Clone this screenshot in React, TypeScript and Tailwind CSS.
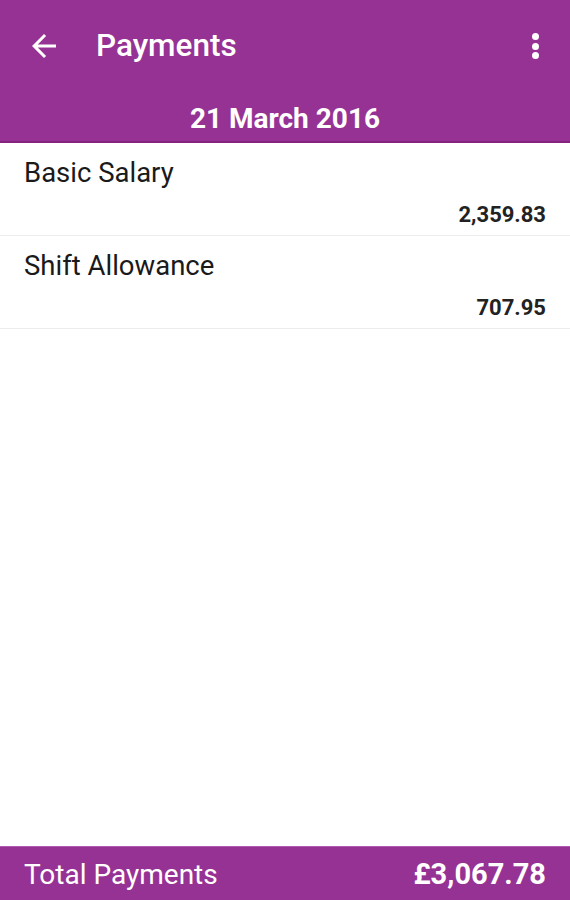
export default function App() {
  const items = [
    { name: "Basic Salary", amount: "2,359.83" },
    { name: "Shift Allowance", amount: "707.95" },
  ];

  return (
    <div className="flex h-[900px] w-[570px] flex-col bg-white font-['Roboto',sans-serif]">
      <div className="flex flex-col border-b-2 border-[#85237f] bg-[#973295] text-white">
        <div className="flex h-[92px] items-center pl-[26px] pr-[30px]">
          <svg width="36" height="36" viewBox="0 0 24 24" className="shrink-0">
            <path
              d="M20 11H7.83l5.59-5.59L12 4l-8 8 8 8 1.41-1.41L7.83 13H20v-2z"
              fill="#fff"
            />
          </svg>
          <p className="ml-[34px] text-[31.5px] font-medium">Payments</p>
          <div className="ml-auto flex flex-col items-center gap-[2.5px] pr-[1px]">
            <span className="h-[7px] w-[7px] rounded-full bg-white"></span>
            <span className="h-[7px] w-[7px] rounded-full bg-white"></span>
            <span className="h-[7px] w-[7px] rounded-full bg-white"></span>
          </div>
        </div>
        <div className="flex h-[49px] items-center justify-center pt-[4px]">
          <p className="text-[28px] font-bold">21 March 2016</p>
        </div>
      </div>
      <div className="flex grow flex-col">
        {items.map((item) => (
          <div
            key={item.name}
            className="flex h-[93px] flex-col border-b border-[#ececec] px-[24px]"
          >
            <p className="mt-[14px] text-[27.5px] leading-[32px] text-[#1a1a1a]">
              {item.name}
            </p>
            <p className="mt-[13px] text-right text-[22px] font-bold leading-[26px] text-[#222]">
              {item.amount}
            </p>
          </div>
        ))}
      </div>
      <div className="flex h-[54px] items-center justify-between border-t border-[#b25ab0] bg-[#973295] px-[24px] pt-[2px] text-white">
        <p className="text-[28px]">Total Payments</p>
        <p className="text-[29px] font-bold">£3,067.78</p>
      </div>
    </div>
  );
}
